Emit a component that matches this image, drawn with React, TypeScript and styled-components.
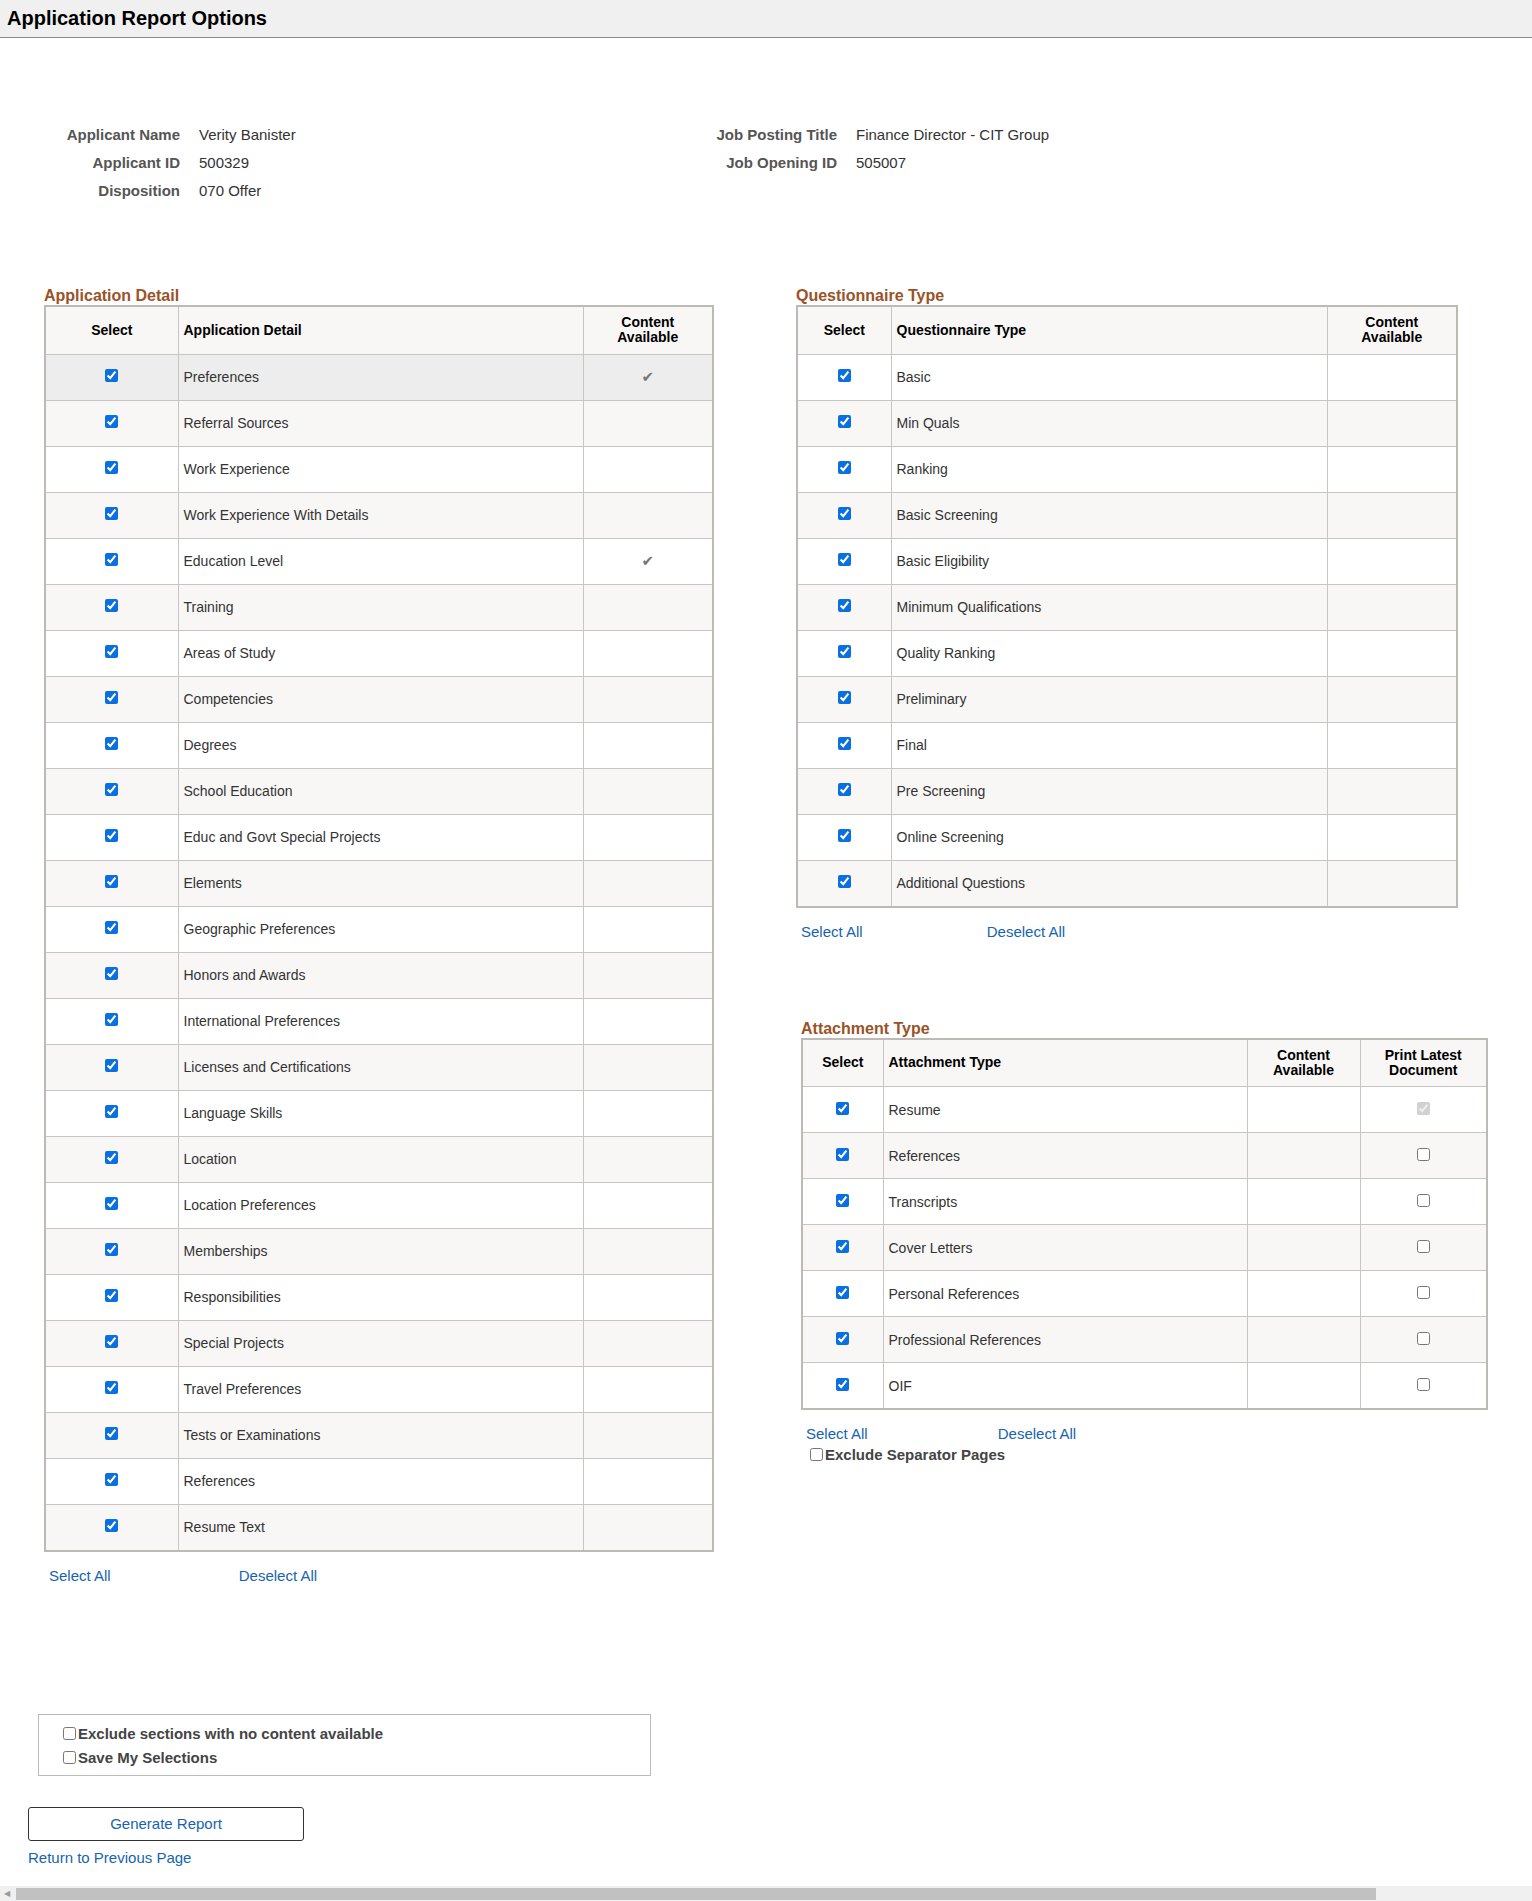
import React from "react";
import styled, { createGlobalStyle } from "styled-components";

const Global = createGlobalStyle`
  html, body { margin: 0; padding: 0; background: #fff; }
  body { font-family: "Liberation Sans", Arial, sans-serif; font-size: 14px; color: #333; }
  input[type=checkbox] { accent-color: #0a6fe0; margin: 0; width: 13px; height: 13px; }
`;

const Header = styled.div`
  height: 37px; background: #f0f0f0; border-bottom: 1px solid #8a8a8a;
  display: flex; align-items: center; padding-left: 7px;
  font-size: 20px; font-weight: bold; color: #000;
`;
const Info = styled.div`
  display: flex; padding: 88px 0 0 0; height: 161px;
`;
const InfoGrid = styled.div<{ $w: number; $lw: number }>`
  width: ${(p) => p.$w}px;
  display: grid; grid-template-columns: ${(p) => p.$lw}px 1fr; column-gap: 19px; row-gap: 10px;
  align-content: start;
`;
const Lbl = styled.div` text-align: right; font-weight: bold; color: #555; font-size: 15px; line-height: 18px; `;
const Val = styled.div` color: #333; font-size: 15px; line-height: 18px; `;

const Main = styled.div` display: flex; padding-left: 44px; gap: 82px; `;
const Col = styled.div<{ $w: number }>` width: ${(p) => p.$w}px; display: flex; flex-direction: column; `;
const SectionTitle = styled.div<{ $ml?: number }>`
  color: #9a5228; font-size: 16px; font-weight: bold; line-height: 18px; height: 18px; margin-left: ${(p) => p.$ml ?? 0}px;
`;
const Table = styled.table<{ $ml?: number }>`
  border-collapse: collapse; border: 2px solid #bdbab6; width: 100%; margin-left: ${(p) => p.$ml ?? 0}px;
  table-layout: fixed;
`;
const Th = styled.th<{ $w?: number; $align?: string }>`
  box-sizing: border-box;
  background: #f8f7f6; border: 1px solid #c8c6c3; height: 48px; font-size: 14px; line-height: 15px;
  color: #000; font-weight: bold; text-align: ${(p) => p.$align ?? "center"}; padding: 0 5px;
  ${(p) => (p.$w ? `width: ${p.$w}px;` : "")}
`;
const Tr = styled.tr<{ $bg: string }>` background: ${(p) => p.$bg}; `;
const Td = styled.td<{ $align?: string }>`
  border: 1px solid #c8c6c3; height: 45px; padding: 0 5px; font-size: 14px; color: #333;
  text-align: ${(p) => p.$align ?? "center"}; vertical-align: middle;
`;
const Check = styled.span` color: #777; font-size: 15px; font-family: "DejaVu Sans", sans-serif; `;
const Links = styled.div<{ $ml: number; $gap: number; $mt: number }>`
  display: flex; gap: ${(p) => p.$gap}px; margin: ${(p) => p.$mt}px 0 0 ${(p) => p.$ml}px;
`;
const Link = styled.a` color: #1564b0; font-size: 15px; text-decoration: none; cursor: pointer; `;
const CbLabel = styled.label<{ $ml?: number }>`
  display: flex; align-items: center; gap: 2px; font-weight: bold; color: #444; font-size: 15px; margin-left: ${(p) => p.$ml ?? 0}px;
  input { accent-color: #fff; }
`;
const OptionsBox = styled.div`
  margin: 130px 0 0 38px; width: 613px; height: 62px; border: 1px solid #bbb; box-sizing: border-box;
  padding: 10px 0 0 24px; display: flex; flex-direction: column; gap: 7px;
`;
const Button = styled.button`
  margin: 31px 0 0 28px; width: 276px; height: 34px; background: #fff; border: 1px solid #333; border-radius: 3px;
  color: #1564b0; font-family: inherit; font-size: 15px;
`;
const Return = styled(Link)` display: block; margin: 8px 0 0 28px; `;
const Scroll = styled.div`
  margin-top: 20px; height: 16px; background: #f0f0f0; display: flex; align-items: center; padding-left: 4px; gap: 6px;
  & > span { color: #999; font-size: 8px; }
  & > div { height: 12px; width: 1360px; background: #c1c1c1; }
`;

const appRows = ["Preferences","Referral Sources","Work Experience","Work Experience With Details","Education Level","Training","Areas of Study","Competencies","Degrees","School Education","Educ and Govt Special Projects","Elements","Geographic Preferences","Honors and Awards","International Preferences","Licenses and Certifications","Language Skills","Location","Location Preferences","Memberships","Responsibilities","Special Projects","Travel Preferences","Tests or Examinations","References","Resume Text"];
const qRows = ["Basic","Min Quals","Ranking","Basic Screening","Basic Eligibility","Minimum Qualifications","Quality Ranking","Preliminary","Final","Pre Screening","Online Screening","Additional Questions"];
const aRows = ["Resume","References","Transcripts","Cover Letters","Personal References","Professional References","OIF"];

const bg = (i: number, hl = false) => (hl && i === 0 ? "#ededed" : i % 2 ? "#f8f7f6" : "#fff");

export default function App() {
  return (
    <>
      <Global />
      <Header>Application Report Options</Header>
      <Info>
        <InfoGrid $w={680} $lw={180}>
          <Lbl>Applicant Name</Lbl><Val>Verity Banister</Val>
          <Lbl>Applicant ID</Lbl><Val>500329</Val>
          <Lbl>Disposition</Lbl><Val>070 Offer</Val>
        </InfoGrid>
        <InfoGrid $w={600} $lw={157}>
          <Lbl>Job Posting Title</Lbl><Val>Finance Director - CIT Group</Val>
          <Lbl>Job Opening ID</Lbl><Val>505007</Val>
        </InfoGrid>
      </Info>
      <Main>
        <Col $w={670}>
          <SectionTitle>Application Detail</SectionTitle>
          <Table>
            <thead><tr>
              <Th $w={133}>Select</Th><Th $align="left">Application Detail</Th><Th $w={130}>Content<br />Available</Th>
            </tr></thead>
            <tbody>
              {appRows.map((r, i) => (
                <Tr key={r} $bg={bg(i, true)}>
                  <Td><input type="checkbox" defaultChecked /></Td>
                  <Td $align="left">{r}</Td>
                  <Td>{i === 0 || i === 4 ? <Check>✔</Check> : null}</Td>
                </Tr>
              ))}
            </tbody>
          </Table>
          <Links $ml={5} $gap={128} $mt={15}><Link>Select All</Link><Link>Deselect All</Link></Links>
        </Col>
        <Col $w={662}>
          <SectionTitle>Questionnaire Type</SectionTitle>
          <Table>
            <thead><tr>
              <Th $w={94}>Select</Th><Th $align="left">Questionnaire Type</Th><Th $w={130}>Content<br />Available</Th>
            </tr></thead>
            <tbody>
              {qRows.map((r, i) => (
                <Tr key={r} $bg={bg(i)}>
                  <Td><input type="checkbox" defaultChecked /></Td>
                  <Td $align="left">{r}</Td>
                  <Td />
                </Tr>
              ))}
            </tbody>
          </Table>
          <Links $ml={5} $gap={124} $mt={15}><Link>Select All</Link><Link>Deselect All</Link></Links>
          <div style={{ height: 80 }} />
          <SectionTitle $ml={5}>Attachment Type</SectionTitle>
          <div style={{ width: 687 }}>
            <Table $ml={5}>
              <thead><tr>
                <Th $w={81}>Select</Th><Th $align="left">Attachment Type</Th><Th $w={113}>Content<br />Available</Th><Th $w={127}>Print Latest<br />Document</Th>
              </tr></thead>
              <tbody>
                {aRows.map((r, i) => (
                  <Tr key={r} $bg={bg(i)}>
                    <Td><input type="checkbox" defaultChecked /></Td>
                    <Td $align="left">{r}</Td>
                    <Td />
                    <Td>{i === 0 ? <input type="checkbox" defaultChecked disabled /> : <input type="checkbox" style={{ accentColor: "#fff" }} />}</Td>
                  </Tr>
                ))}
              </tbody>
            </Table>
          </div>
          <Links $ml={10} $gap={130} $mt={15}><Link>Select All</Link><Link>Deselect All</Link></Links>
          <div style={{ height: 4 }} />
          <CbLabel $ml={14}><input type="checkbox" />Exclude Separator Pages</CbLabel>
        </Col>
      </Main>
      <OptionsBox>
        <CbLabel><input type="checkbox" />Exclude sections with no content available</CbLabel>
        <CbLabel><input type="checkbox" />Save My Selections</CbLabel>
      </OptionsBox>
      <Button>Generate Report</Button>
      <Return>Return to Previous Page</Return>
      <Scroll><span>◀</span><div /></Scroll>
    </>
  );
}
